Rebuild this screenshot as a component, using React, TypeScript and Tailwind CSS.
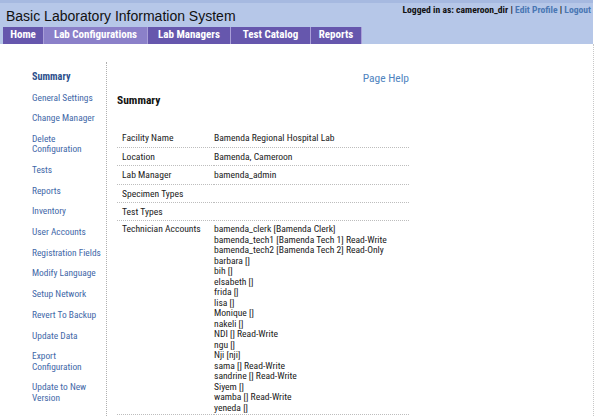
const TABS = [
  { label: 'Home', w: 'w-[41px]', active: false },
  { label: 'Lab Configurations', w: 'w-[104px]', active: true },
  { label: 'Lab Managers', w: 'w-[83px]', active: false },
  { label: 'Test Catalog', w: 'w-[80px]', active: false },
  { label: 'Reports', w: 'w-[51px]', active: false },
];

// two-line entries in the side menu
const WRAPPED = ['Delete Configuration', 'Export Configuration', 'Update to New Version'];

const SIDE_LINKS = [
  'Summary',
  'General Settings',
  'Change Manager',
  'Delete Configuration',
  'Tests',
  'Reports',
  'Inventory',
  'User Accounts',
  'Registration Fields',
  'Modify Language',
  'Setup Network',
  'Revert To Backup',
  'Update Data',
  'Export Configuration',
  'Update to New Version',
];

const SUMMARY_ROWS: [string, string][] = [
  ['Facility Name', 'Bamenda Regional Hospital Lab'],
  ['Location', 'Bamenda, Cameroon'],
  ['Lab Manager', 'bamenda_admin'],
  ['Specimen Types', ''],
  ['Test Types', ''],
];

const TECHNICIANS = [
  'bamenda_clerk [Bamenda Clerk]',
  'bamenda_tech1 [Bamenda Tech 1] Read-Write',
  'bamenda_tech2 [Bamenda Tech 2] Read-Only',
  'barbara []',
  'bih []',
  'elsabeth []',
  'frida []',
  'lisa []',
  'Monique []',
  'nakeli []',
  'NDI [] Read-Write',
  'ngu []',
  'Nji [nji]',
  'sama [] Read-Write',
  'sandrine [] Read-Write',
  'Siyem []',
  'wamba [] Read-Write',
  'yeneda []',
];

function App() {
  return (
    <div className="w-[596px] h-[416px] overflow-hidden bg-white text-[#222] font-['Liberation_Sans_Narrow','Roboto_Condensed',Roboto,sans-serif]">
      {/* header */}
      <header className="w-[593px] h-[44px] bg-[#b6c7e8] border-t-[3px] border-[#a6b9e0] flex flex-col">
        <div className="flex items-center justify-between h-[24px]">
          <h1 className="pl-[6px] pt-[2px] text-[14px] text-[#111] font-['Liberation_Sans',Arial,sans-serif]">
            Basic Laboratory Information System
          </h1>
          <div className="pr-[2px] pb-[10px] text-[9.6px] font-bold text-[#111]">
            Logged in as: cameroon_dir |{' '}
            <a className="text-[#4a77b4]">Edit Profile</a> |{' '}
            <a className="text-[#4a77b4]">Logout</a>
          </div>
        </div>
        <nav className="flex pl-[3px] h-[17px]">
          {TABS.map((t) => (
            <div
              key={t.label}
              className={`${t.w} flex items-center justify-center text-[11px] font-bold text-white border-r border-[#a99fd8] ${
                t.active ? 'bg-[#8b80c9]' : 'bg-[#6657ad]'
              }`}
            >
              {t.label}
            </div>
          ))}
        </nav>
      </header>

      {/* body */}
      <div className="w-[594px] h-[372px] border-r border-dotted border-[#c8c8c8] pt-[18px] flex">
        <aside className="w-[107px] shrink-0 border-r border-dotted border-[#b0b0b0] pl-[32px] pr-[4px] pt-[10px]">
          <ul className="flex flex-col gap-[10.4px]">
            {SIDE_LINKS.map((l, i) => (
              <li
                key={l}
                className={`leading-[10.3px] ${
                  i === 0 ? 'text-[10.2px] font-bold text-[#2c4f8c]' : 'text-[9.4px] text-[#3f68a8]'
                } ${WRAPPED.includes(l) ? 'w-[62px]' : 'whitespace-nowrap'}`}
              >
                {l}
              </li>
            ))}
          </ul>
        </aside>

        <main className="w-[302px] pl-[10px] pt-[10px]">
          <div className="text-right text-[11.5px] leading-[12px] text-[#4f84c0]">Page Help</div>
          <h2 className="mt-[10px] text-[11.5px] leading-[12px] font-bold text-[#111]">Summary</h2>

          <table className="mt-[23px] w-full text-[9.6px] border-collapse">
            <tbody>
              {SUMMARY_ROWS.map(([k, v]) => (
                <tr key={k} className="h-[18.4px] border-b border-dotted border-[#bdbdbd]">
                  <td className="w-[97px] pl-[5px] pt-[1px] align-middle">{k}</td>
                  <td className="pt-[1px] align-middle">{v}</td>
                </tr>
              ))}
              <tr className="border-b border-dotted border-[#bdbdbd]">
                <td className="pl-[5px] pt-[3px] pb-[1px] align-top leading-[10.5px]">
                  Technician Accounts
                </td>
                <td className="pt-[3px] pb-[1px] align-top leading-[10.5px]">
                  {TECHNICIANS.map((t) => (
                    <div key={t}>{t}</div>
                  ))}
                </td>
              </tr>
            </tbody>
          </table>
        </main>
      </div>
    </div>
  );
}

export default App;
